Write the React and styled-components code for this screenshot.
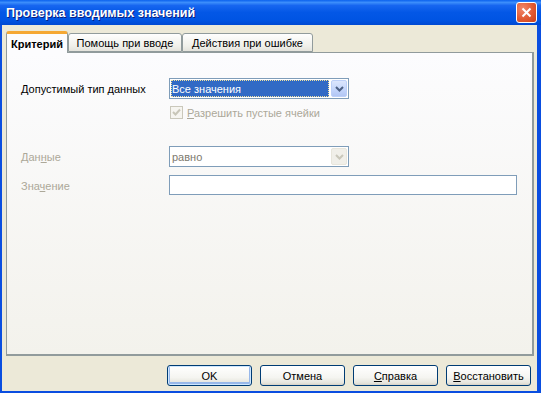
import React from "react";
import styled, { createGlobalStyle } from "styled-components";

const GlobalStyle = createGlobalStyle`
  html, body {
    margin: 0;
    padding: 0;
    background: #1447c9;
  }
  body {
    font-family: "Liberation Sans", Tahoma, sans-serif;
    font-size: 11px;
  }
`;

const Window = styled.div`
  width: 541px;
  height: 393px;
  box-sizing: border-box;
  display: flex;
  flex-direction: column;
  background: #ece9d8;
  border-left: 2px solid #0a4ee0;
  border-right: 4px solid #0a4ee0;
  border-bottom: 2px solid #0a4ee0;
`;

const TitleBar = styled.div`
  height: 25px;
  flex: none;
  margin: 0 -4px 0 -2px;
  display: flex;
  align-items: center;
  justify-content: space-between;
  padding: 0 4px 0 6px;
  background: linear-gradient(
    to bottom,
    #0b62ee 0%,
    #3b8dfb 10%,
    #1766f0 22%,
    #0357e6 50%,
    #0054e3 80%,
    #0049d2 100%
  );
`;

const Title = styled.span`
  color: #fff;
  font-weight: bold;
  font-size: 12.5px;
  text-shadow: 1px 1px 0 #0a1f80;
`;

const CloseButton = styled.div`
  width: 19px;
  height: 19px;
  border: 1px solid #fff;
  border-radius: 3px;
  background: radial-gradient(circle at 30% 30%, #f0876a 0%, #e15a32 55%, #c8401b 100%);
  display: flex;
  align-items: center;
  justify-content: center;
`;

const Body = styled.div`
  flex: 1;
  display: flex;
  flex-direction: column;
  padding: 6px 1px 0 4px;
`;

const TabStrip = styled.div`
  display: flex;
  align-items: flex-end;
  height: 21px;
  position: relative;
  z-index: 1;
`;

const Tab = styled.div`
  box-sizing: border-box;
  width: ${(p) => p.$width}px;
  height: ${(p) => (p.$active ? "22px" : "19px")};
  margin-bottom: ${(p) => (p.$active ? "-1px" : "0")};
  display: flex;
  align-items: center;
  justify-content: center;
  color: #000;
  font-weight: ${(p) => (p.$active ? "bold" : "normal")};
  border: 1px solid #919b9c;
  border-bottom: ${(p) => (p.$active ? "none" : "1px solid #919b9c")};
  border-radius: 3px 3px 0 0;
  background: ${(p) =>
    p.$active ? "#fcfcfe" : "linear-gradient(to bottom, #fefefe, #f0f0ea 70%, #e4e3dc)"};
  border-top: ${(p) => (p.$active ? "3px solid #f5a834" : "1px solid #919b9c")};
`;

const Panel = styled.div`
  width: 528px;
  height: 304px;
  box-sizing: border-box;
  border: 1px solid #919b9c;
  border-right-width: 2px;
  border-bottom-width: 2px;
  background: linear-gradient(to bottom, #fcfcfe, #f3f2ec);
  padding: 25px 0 0 14px;
  display: flex;
  flex-direction: column;
`;

const Row = styled.div`
  display: flex;
  align-items: center;
  margin-top: ${(p) => p.$gap || 0}px;
`;

const Label = styled.div`
  width: 148px;
  flex: none;
  color: ${(p) => (p.$disabled ? "#aca899" : "#000")};
  padding-top: 1px;
`;

const Combo = styled.div`
  width: 180px;
  height: 21px;
  box-sizing: border-box;
  border: 1px solid #7f9db9;
  background: #fff;
  display: flex;
  align-items: center;
  padding: 1px;
  gap: 2px;
`;

const ComboValue = styled.div`
  flex: 1;
  height: 17px;
  box-sizing: border-box;
  display: flex;
  align-items: center;
  padding-left: 1px;
  color: ${(p) => (p.$selected ? "#fff" : "#7d7a6f")};
  background: ${(p) => (p.$selected ? "#316ac5" : "transparent")};
  outline: ${(p) => (p.$selected ? "1px dotted #f0e2a0" : "none")};
  outline-offset: -1px;
`;

const DropButton = styled.div`
  width: 16px;
  height: 17px;
  box-sizing: border-box;
  flex: none;
  border-radius: 2px;
  display: flex;
  align-items: center;
  justify-content: center;
  border: 1px solid ${(p) => (p.$disabled ? "#e8e6dc" : "#bccff8")};
  background: ${(p) =>
    p.$disabled
      ? "#f0efe9"
      : "linear-gradient(to bottom, #dce6fd, #c2d4fb 60%, #b2c6f4)"};
`;

const CheckRow = styled.div`
  display: flex;
  align-items: center;
  gap: 4px;
  margin: 7px 0 0 149px;
  color: #aca899;
`;

const CheckBox = styled.div`
  width: 13px;
  height: 13px;
  box-sizing: border-box;
  border: 1px solid #cac8bb;
  background: #f6f5f0;
  display: flex;
  align-items: center;
  justify-content: center;
`;

const TextInput = styled.div`
  width: 348px;
  height: 20px;
  box-sizing: border-box;
  border: 1px solid #7f9db9;
  background: #fff;
`;

const Footer = styled.div`
  flex: 1;
  display: flex;
  justify-content: flex-end;
  align-items: flex-start;
  gap: 8px;
  padding: 9px 5px 0 0;
`;

const Button = styled.div`
  width: 85px;
  height: 21px;
  box-sizing: border-box;
  border: 1px solid #003c74;
  border-radius: 3px;
  display: flex;
  align-items: center;
  justify-content: center;
  color: #000;
  background: linear-gradient(to bottom, #ffffff, #f5f5f1 60%, #e5e4dc 90%, #d6d0c5);
  box-shadow: ${(p) =>
    p.$default ? "inset 0 0 0 1px #cee7ff, inset 0 -1px 0 2px #98b8ea" : "none"};
`;

const Chevron = ({ color }) => (
  <svg width="9" height="6" viewBox="0 0 9 6">
    <path d="M1 1 L4.5 4.5 L8 1" fill="none" stroke={color} strokeWidth="2" />
  </svg>
);

const CloseIcon = () => (
  <svg width="11" height="11" viewBox="0 0 11 11">
    <path d="M1.5 1.5 L9.5 9.5 M9.5 1.5 L1.5 9.5" stroke="#fff" strokeWidth="2" />
  </svg>
);

const CheckIcon = () => (
  <svg width="9" height="9" viewBox="0 0 9 9">
    <path d="M1 4 L3.5 6.5 L8 1.5" fill="none" stroke="#c8c6b8" strokeWidth="2" />
  </svg>
);

const App = () => {
  return (
    <>
      <GlobalStyle />
      <Window>
        <TitleBar>
          <Title>Проверка вводимых значений</Title>
          <CloseButton>
            <CloseIcon />
          </CloseButton>
        </TitleBar>
        <Body>
          <TabStrip>
            <Tab $active $width={62}>Критерий</Tab>
            <Tab $width={114}>Помощь при вводе</Tab>
            <Tab $width={131}>Действия при ошибке</Tab>
          </TabStrip>
          <Panel>
            <Row>
              <Label>Допустимый тип данных</Label>
              <Combo>
                <ComboValue $selected>Все значения</ComboValue>
                <DropButton>
                  <Chevron color="#4d6185" />
                </DropButton>
              </Combo>
            </Row>
            <CheckRow>
              <CheckBox>
                <CheckIcon />
              </CheckBox>
              <span>
                <u>Р</u>азрешить пустые ячейки
              </span>
            </CheckRow>
            <Row $gap={27}>
              <Label $disabled>
                Дан<u>н</u>ые
              </Label>
              <Combo>
                <ComboValue>равно</ComboValue>
                <DropButton $disabled>
                  <Chevron color="#c9c7ba" />
                </DropButton>
              </Combo>
            </Row>
            <Row $gap={8}>
              <Label $disabled>
                Зна<u>ч</u>ение
              </Label>
              <TextInput />
            </Row>
          </Panel>
          <Footer>
            <Button $default>OK</Button>
            <Button>Отмена</Button>
            <Button>
              <span>
                <u>С</u>правка
              </span>
            </Button>
            <Button>
              <span>
                <u>В</u>осстановить
              </span>
            </Button>
          </Footer>
        </Body>
      </Window>
    </>
  );
};

export default App;
